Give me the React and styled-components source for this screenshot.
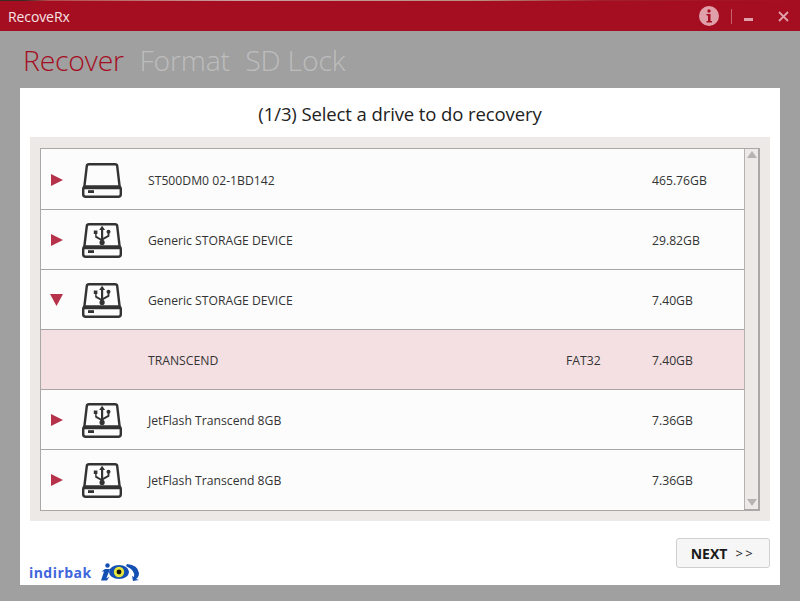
import React from "react";
import styled, { createGlobalStyle } from "styled-components";

const Global = createGlobalStyle`
  html, body { margin: 0; padding: 0; background: #a0a0a0; }
  * { box-sizing: border-box; }
`;

const Page = styled.div`
  width: 800px;
  height: 601px;
  display: flex;
  flex-direction: column;
  overflow: hidden;
  background: #a0a0a0;
  font-family: "Open Sans", "Liberation Sans", sans-serif;
  color: #333;
`;
const TopStrip = styled.div`
  height: 1px;
  flex: none;
  background: linear-gradient(90deg, #3a2a22 0 3%, #b34a4a 6%, #c9a0a0 30%, #b89080 60%, #a02030 75%, #a50e20 100%);
`;
const TitleBar = styled.header`
  height: 30px;
  flex: none;
  background: #a50e20;
  display: flex;
  align-items: center;
  padding: 0 11px 0 8px;
`;
const AppName = styled.div`
  flex: 1;
  color: #f6e4e6;
  font-size: 14px;
  letter-spacing: -0.1px;
`;
const WinControls = styled.div`
  display: flex;
  align-items: center;
`;
const Sep = styled.span`
  width: 1px;
  height: 15px;
  background: #c8606c;
  margin: 0 12px 0 12px;
`;
const Tabs = styled.nav`
  height: 57px;
  flex: none;
  display: flex;
  align-items: center;
  gap: 15.5px;
  padding: 1px 0 0 23px;
`;
const Tab = styled.div`
  font-size: 28.4px;
  font-weight: 300;
  letter-spacing: -0.2px;
  color: ${(p) => (p.$active ? "#a50e20" : "#bdbdbd")};
`;
const Main = styled.main`
  width: 760px;
  height: 497px;
  margin-left: 20px;
  background: #fff;
  display: flex;
  flex-direction: column;
  padding: 0 10px;
  flex: none;
`;
const Heading = styled.h1`
  margin: 0;
  height: 49px;
  flex: none;
  display: flex;
  align-items: center;
  justify-content: center;
  padding-top: 2px;
  font-size: 18.5px;
  font-weight: 400;
  color: #222;
  letter-spacing: -0.1px;
`;
const Tray = styled.section`
  width: 740px;
  height: 384px;
  flex: none;
  background: #ece9e6;
  padding: 11px 10px 10px;
`;
const ListBox = styled.div`
  height: 363px;
  border: 2px solid #aaa8a6;
  border-top-width: 1px;
  border-left-width: 1px;
  display: flex;
  background: #fcfcfc;
`;
const Rows = styled.div`
  width: 704px;
  flex: none;
  display: flex;
  flex-direction: column;
  border-right: 1px solid #b4b2b0;
  padding-top: 1px;
`;
const Row = styled.div`
  height: 60px;
  flex: none;
  display: grid;
  grid-template-columns: 107px 418px 86px 1fr;
  align-items: center;
  font-size: 12.2px;
  color: #333;
  padding-top: 2px;
  background: ${(p) => (p.$selected ? "#f4e0e2" : "#fcfcfc")};
  border-bottom: 1px solid ${(p) => (p.$last ? "transparent" : "#a8a6a4")};
`;
const RowIcons = styled.div`
  display: flex;
  align-items: center;
  gap: 19px;
  padding: 0 0 0 9px;
`;
const TriSvg = styled.svg`
  flex: none;
  margin-bottom: 2px;
`;
const Scroll = styled.div`
  flex: 1;
  background: #ece9e6;
  display: flex;
  flex-direction: column;
  justify-content: space-between;
  align-items: center;
  padding: 2px 0 3px;
`;
const ScrollArrow = styled.div`
  width: 0;
  height: 0;
  border-left: 5px solid transparent;
  border-right: 5px solid transparent;
  ${(p) => (p.$down ? "border-top: 7px solid #b4b4b4;" : "border-bottom: 7px solid #b4b4b4;")}
`;
const Footer = styled.footer`
  flex: 1;
  display: flex;
  justify-content: space-between;
  align-items: flex-end;
  padding-bottom: 3px;
`;
const Brand = styled.div`
  display: flex;
  align-items: center;
  gap: 8px;
  margin-left: -1px;
  color: #3f66dc;
  font-size: 14px;
  font-weight: 700;
  letter-spacing: 0.45px;
`;
const NextButton = styled.button`
  width: 94px;
  height: 30px;
  margin-bottom: 14px;
  background: #f6f6f6;
  border: 1px solid #cfcfcf;
  border-radius: 3px;
  font-family: inherit;
  font-size: 14px;
  font-weight: 700;
  color: #1a1a1a;
  display: flex;
  align-items: center;
  justify-content: center;
  gap: 8px;
  padding: 0;
`;
const Arrows = styled.span`
  font-weight: 400;
  font-size: 13px;
  letter-spacing: 2.5px;
`;
const MinimizeSvg = styled.svg`
  margin: 6px 24px 0 0;
`;

const Tri = ({ down }) => (
  <TriSvg width="13" height="14" viewBox="0 0 13 14">
    {down ? <path d="M0 1h13L6.5 13z" fill="#b5324a" /> : <path d="M1 1l12 6-12 6z" fill="#b5324a" />}
  </TriSvg>
);

const Drive = ({ usb }) => (
  <svg width="40" height="35" viewBox="0 0 40 35" fill="none" stroke="#333" strokeWidth="2.4">
    <path d="M4.8 3Q5 1.2 7 1.2h26q2 0 2.2 1.8l2.6 22H2.2z" strokeLinejoin="round" />
    <rect x="1.2" y="23.5" width="37.6" height="10.3" rx="2.6" />
    <rect x="6" y="27.2" width="6" height="2.8" fill="#333" stroke="none" />
    {usb && (
      <g fill="#333" stroke="none">
        <path d="M19 6h2.2v13H19z" />
        <path d="M20.1 2.8l3 4.2h-6z" />
        <circle cx="20.1" cy="19.4" r="2.6" />
        <path d="M11.8 7.5h3.6v3.6h-.8v2l5 2.8v2.2l-6.4-3.6v-3.4h-1.4z" />
        <circle cx="26.5" cy="8.8" r="2" />
        <path d="M25.6 10h1.8v3.4l-6.6 3.8v-2.2l4.8-2.7z" />
      </g>
    )}
  </svg>
);

const Info = () => (
  <svg width="20" height="20" viewBox="0 0 20 20">
    <circle cx="10" cy="10" r="10" fill="#e0a0aa" />
    <circle cx="10" cy="5" r="1.7" fill="#a50e20" />
    <path d="M7.5 8h4v7h1.5v1.6H7.5V15H9V9.6H7.5z" fill="#a50e20" />
  </svg>
);
const Minimize = () => (
  <MinimizeSvg width="10" height="5" viewBox="0 0 10 5">
    <rect width="9" height="3" y="1" fill="#e0a0aa" />
  </MinimizeSvg>
);
const Close = () => (
  <svg width="11" height="11" viewBox="0 0 11 11">
    <path d="M1 1l9 9M10 1l-9 9" stroke="#e0a0aa" strokeWidth="1.8" />
  </svg>
);

const Logo = () => (
  <svg width="41" height="19" viewBox="0 0 41 19">
    <circle cx="7.5" cy="2.5" r="2.2" fill="#1450b4" />
    <path d="M5 6h5L6.5 15q0 1 3-1.5l-2.5 4H1l3-9H1.5z" fill="#1450b4" />
    <ellipse cx="19" cy="9" rx="10" ry="7" fill="#1450b4" />
    <circle cx="19" cy="9" r="5.2" fill="#e4e43c" />
    <circle cx="19" cy="9" r="2.4" fill="#111" />
    <path d="M27 1q11 1 12 9 0 4-3 6l3 1-6 1-1-5 2 1q2-6-8-11z" fill="#1450b4" />
  </svg>
);

const rows = [
  { name: "ST500DM0 02-1BD142", size: "465.76GB" },
  { name: "Generic STORAGE DEVICE", size: "29.82GB", usb: true },
  { name: "Generic STORAGE DEVICE", size: "7.40GB", usb: true, open: true },
  { name: "TRANSCEND", fs: "FAT32", size: "7.40GB", selected: true },
  { name: "JetFlash Transcend 8GB", size: "7.36GB", usb: true },
  { name: "JetFlash Transcend 8GB", size: "7.36GB", usb: true },
];

export default function App() {
  return (
    <Page>
      <Global />
      <TopStrip />
      <TitleBar>
        <AppName>RecoveRx</AppName>
        <WinControls>
          <Info />
          <Sep />
          <Minimize />
          <Close />
        </WinControls>
      </TitleBar>
      <Tabs>
        <Tab $active>Recover</Tab>
        <Tab>Format</Tab>
        <Tab>SD Lock</Tab>
      </Tabs>
      <Main>
        <Heading>(1/3) Select a drive to do recovery</Heading>
        <Tray>
          <ListBox>
            <Rows>
              {rows.map((r, i) => (
                <Row key={i} $selected={r.selected} $last={i === rows.length - 1}>
                  <RowIcons>
                    {!r.selected && (
                      <>
                        <Tri down={r.open} />
                        <Drive usb={r.usb} />
                      </>
                    )}
                  </RowIcons>
                  <span>{r.name}</span>
                  <span>{r.fs}</span>
                  <span>{r.size}</span>
                </Row>
              ))}
            </Rows>
            <Scroll>
              <ScrollArrow />
              <ScrollArrow $down />
            </Scroll>
          </ListBox>
        </Tray>
        <Footer>
          <Brand>
            indirbak
            <Logo />
          </Brand>
          <NextButton>
            NEXT <Arrows>&gt;&gt;</Arrows>
          </NextButton>
        </Footer>
      </Main>
    </Page>
  );
}
